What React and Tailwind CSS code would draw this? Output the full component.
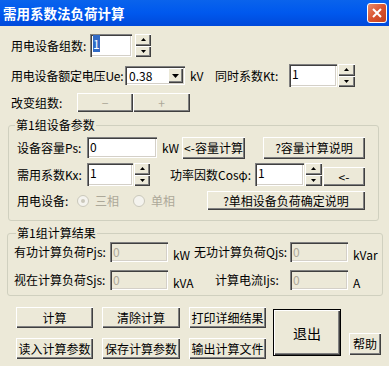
import React from "react";

const raised =
  "shadow-[inset_1px_1px_0_#ffffff,inset_-1px_-1px_0_#404040,inset_-2px_-2px_0_#808080]";
const sunken =
  "shadow-[inset_1px_1px_0_#808080,inset_2px_2px_0_#404040,inset_-1px_-1px_0_#ffffff,inset_-2px_-2px_0_#d4d0c8]";

const Btn = ({ className = "", disabled, children }) => (
  <div
    className={`flex shrink-0 items-center justify-center bg-[#ECE9D8] ${raised} ${
      disabled ? "text-[#ACA899]" : "text-black"
    } ${className}`}
  >
    {children}
  </div>
);

const Field = ({ className = "", value, disabled, selected }) => (
  <div
    className={`shrink-0 ${sunken} ${
      disabled ? "bg-[#ECE9D8] text-[#ACA899]" : "bg-white text-black"
    } pl-[3px] pt-[3px] ${className}`}
  >
    {selected ? <span className="bg-[#316AC5] text-white">{value}</span> : value}
  </div>
);

const Spin = ({ className = "" }) => (
  <div className={`flex shrink-0 flex-col ${className}`}>
    <Btn className="flex-1">
      <svg width="5" height="3" viewBox="0 0 5 3">
        <path d="M2.5 0L5 3H0z" fill="#000" />
      </svg>
    </Btn>
    <Btn className="flex-1">
      <svg width="5" height="3" viewBox="0 0 5 3">
        <path d="M0 0H5L2.5 3z" fill="#000" />
      </svg>
    </Btn>
  </div>
);

const Radio = ({ checked, label, className = "" }) => (
  <div className={`flex items-center ${className}`}>
    <div className="w-[12px] h-[12px] rounded-full border border-[#CAC8BB] bg-[#F4F3EE] flex items-center justify-center">
      {checked && <div className="w-[4px] h-[4px] rounded-full bg-[#CAC8BB]" />}
    </div>
    <span className="ml-[6px] text-[#ACA899]">{label}</span>
  </div>
);

export default function App() {
  return (
    <div className="w-[389px] h-[366px] bg-[#ECE9D8] overflow-hidden whitespace-nowrap text-black text-[12px] leading-[14px] font-['Noto_Sans_CJK_SC',sans-serif]">
      {/* title bar */}
      <div className="h-[26px] bg-gradient-to-b from-[#0A63EC] via-[#0058EE] to-[#0049DA] flex items-center justify-between pl-[3px] pr-[2px]">
        <span className="text-white font-bold text-[13.5px] leading-[16px]">需用系数法负荷计算</span>
        <div className="w-[20px] h-[20px] rounded-[3px] border border-white bg-gradient-to-br from-[#E88A6A] via-[#D9532F] to-[#C2401E] flex items-center justify-center">
          <svg width="10" height="10" viewBox="0 0 10 10">
            <path d="M1 1L9 9M9 1L1 9" stroke="#fff" strokeWidth="2" />
          </svg>
        </div>
      </div>

      {/* group count */}
      <div className="flex items-center h-[23px] mt-[8px] pl-[11px]">
        <span className="w-[79px] shrink-0">用电设备组数:</span>
        <Field className="w-[42px] h-[23px]" value="1" selected />
        <Spin className="w-[16px] h-[23px] ml-[3px]" />
      </div>

      {/* voltage + Kt */}
      <div className="flex items-center h-[23px] mt-[7px] pl-[11px]">
        <span className="w-[114px] shrink-0 tracking-[-0.2px]">用电设备额定电压Ue:</span>
        <div className={`w-[60px] h-[19px] shrink-0 bg-white ${sunken} flex items-center justify-between p-[2px]`}>
          <span className="pl-[2px]">0.38</span>
          <Btn className="w-[15px] h-[15px]">
            <svg width="7" height="4" viewBox="0 0 7 4">
              <path d="M0 0H7L3.5 4z" fill="#000" />
            </svg>
          </Btn>
        </div>
        <span className="ml-[5px] w-[20px] shrink-0">kV</span>
        <span className="ml-[5px] w-[74px] shrink-0">同时系数Kt:</span>
        <Field className="w-[48px] h-[23px]" value="1" />
        <Spin className="w-[17px] h-[23px] ml-[1px]" />
      </div>

      {/* change groups */}
      <div className="flex items-center h-[19px] mt-[6px] pl-[11px]">
        <span className="w-[66px] shrink-0">改变组数:</span>
        <Btn className="w-[56px] h-[19px]" disabled>−</Btn>
        <Btn className="w-[57px] h-[19px]" disabled>+</Btn>
      </div>

      {/* group 1 params */}
      <fieldset className="mt-[6px] ml-[8px] w-[371px] border border-[#D0D0BF] rounded-[3px] pb-[10px]">
        <legend className="ml-[6px] px-[1px] leading-[14px]">第1组设备参数</legend>

        <div className="flex items-start h-[22px] mt-[5px] pl-[8px]">
          <span className="w-[70px] shrink-0 self-center">设备容量Ps:</span>
          <Field className="w-[70px] h-[21px]" value="0" />
          <span className="ml-[5px] w-[20px] shrink-0 self-center">kW</span>
          <Btn className="w-[63px] h-[22px]">&lt;-容量计算</Btn>
          <Btn className="ml-[18px] w-[102px] h-[22px]">?容量计算说明</Btn>
        </div>

        <div className="flex items-center h-[23px] mt-[4px] pl-[8px]">
          <span className="w-[70px] shrink-0">需用系数Kx:</span>
          <Field className="w-[46px] h-[23px]" value="1" />
          <Spin className="w-[16px] h-[23px] ml-[1px]" />
          <span className="ml-[20px] w-[85px] shrink-0">功率因数Cosφ:</span>
          <Field className="w-[49px] h-[23px]" value="1" />
          <Spin className="w-[17px] h-[23px] ml-[1px]" />
          <Btn className="ml-[1px] w-[42px] h-[19px] self-end">&lt;-</Btn>
        </div>

        <div className="flex items-center h-[19px] mt-[5px] pl-[8px]">
          <span className="w-[60px] shrink-0">用电设备:</span>
          <Radio checked label="三相" />
          <Radio label="单相" className="ml-[14px]" />
          <Btn className="ml-auto mr-[13px] w-[158px] h-[19px]">?单相设备负荷确定说明</Btn>
        </div>
      </fieldset>

      {/* group 1 results */}
      <fieldset className="mt-[5px] ml-[7px] w-[376px] border border-[#D0D0BF] rounded-[3px] pb-[5px]">
        <legend className="ml-[8px] px-[1px] leading-[14px]">第1组计算结果</legend>

        <div className="flex items-center h-[20px] mt-[2px] pl-[6px]">
          <span className="w-[96px] shrink-0">有功计算负荷Pjs:</span>
          <Field className="w-[58px] h-[20px]" value="0" disabled />
          <span className="ml-[5px] w-[21px] shrink-0 self-end">kW</span>
          <span className="w-[96px] shrink-0">无功计算负荷Qjs:</span>
          <Field className="w-[58px] h-[20px]" value="0" disabled />
          <span className="ml-[5px] self-end">kVar</span>
        </div>

        <div className="flex items-center h-[20px] mt-[8px] pl-[6px]">
          <span className="w-[96px] shrink-0">视在计算负荷Sjs:</span>
          <Field className="w-[58px] h-[20px]" value="0" disabled />
          <span className="ml-[5px] w-[21px] shrink-0 self-end">kVA</span>
          <span className="ml-[21px] w-[75px] shrink-0">计算电流Ijs:</span>
          <Field className="w-[58px] h-[20px]" value="0" disabled />
          <span className="ml-[5px] self-end">A</span>
        </div>
      </fieldset>

      {/* bottom buttons */}
      <div className="flex items-start mt-[11px] pl-[16px]">
        <div className="grid grid-cols-[77px_78px_77px] gap-x-[9px] gap-y-[10px]">
          <Btn className="h-[21px]">计算</Btn>
          <Btn className="h-[21px]">清除计算</Btn>
          <Btn className="h-[21px]">打印详细结果</Btn>
          <Btn className="h-[21px]">读入计算参数</Btn>
          <Btn className="h-[21px]">保存计算参数</Btn>
          <Btn className="h-[21px]">输出计算文件</Btn>
        </div>
        <div className="ml-[7px] mt-[2px] w-[68px] h-[47px] shrink-0 border border-black">
          <Btn className="w-full h-full text-[14px]">退出</Btn>
        </div>
        <Btn className="ml-[8px] mt-[26px] w-[32px] h-[22px]">帮助</Btn>
      </div>
    </div>
  );
}
